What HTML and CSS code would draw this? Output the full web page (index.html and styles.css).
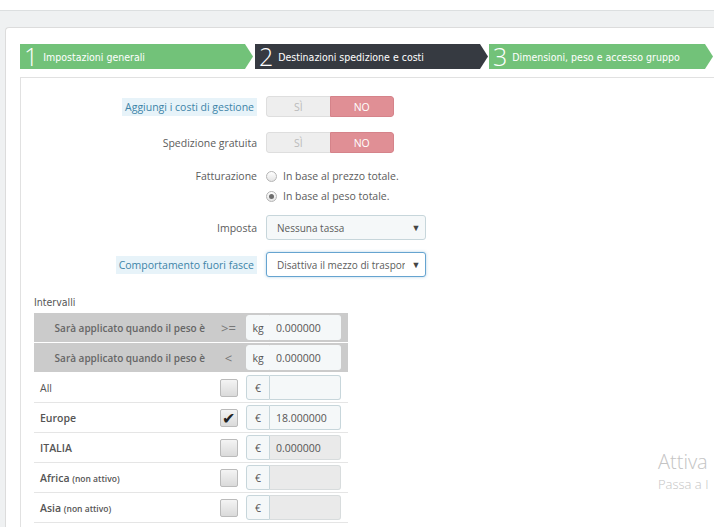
FILE: index.html
```html
<!DOCTYPE html>
<html lang="it">
<head>
    <meta charset="UTF-8">
    <title>Corriere - Destinazioni spedizione e costi</title>
    <link rel="stylesheet" href="styles.css">
</head>
<body>

    <div class="topbar"></div>

    <div class="page">
        <div class="panel">

            <div class="steps">
                <div class="step step-done"><span class="step-num">1</span>Impostazioni generali</div>
                <div class="step step-current"><span class="step-num">2</span>Destinazioni spedizione e costi</div>
                <div class="step step-done step-last"><span class="step-num">3</span>Dimensioni, peso e accesso gruppo</div>
            </div>

            <div class="step-content">

                <div class="form-row">
                    <div class="label-col"><span class="hint">Aggiungi i costi di gestione</span></div>
                    <div class="switch">
                        <span class="switch-yes">SÌ</span>
                        <span class="switch-no">NO</span>
                    </div>
                </div>

                <div class="form-row">
                    <div class="label-col">Spedizione gratuita</div>
                    <div class="switch">
                        <span class="switch-yes">SÌ</span>
                        <span class="switch-no">NO</span>
                    </div>
                </div>

                <div class="form-row row-radio">
                    <div class="label-col">Fatturazione</div>
                    <div class="radios">
                        <label class="radio"><span class="radio-dot"></span>In base al prezzo totale.</label>
                        <label class="radio"><span class="radio-dot checked"></span>In base al peso totale.</label>
                    </div>
                </div>

                <div class="form-row row-select">
                    <div class="label-col">Imposta</div>
                    <div class="select"><span class="select-text">Nessuna tassa</span><span class="caret">▼</span></div>
                </div>

                <div class="form-row row-select2">
                    <div class="label-col"><span class="hint">Comportamento fuori fasce</span></div>
                    <div class="select select-focus"><span class="select-text">Disattiva il mezzo di traspor</span><span class="caret">▼</span></div>
                </div>

                <div class="ranges-title">Intervalli</div>

                <table class="ranges">
                    <tr class="range-head">
                        <td class="zone-name">Sarà applicato quando il peso è</td>
                        <td class="op">&gt;=</td>
                        <td class="cell-input">
                            <div class="input-group"><span class="addon">kg</span><span class="field">0.000000</span></div>
                        </td>
                    </tr>
                    <tr class="range-head">
                        <td class="zone-name">Sarà applicato quando il peso è</td>
                        <td class="op">&lt;</td>
                        <td class="cell-input">
                            <div class="input-group"><span class="addon">kg</span><span class="field">0.000000</span></div>
                        </td>
                    </tr>
                    <tr class="zone">
                        <td class="zone-label normal">All</td>
                        <td class="op"><span class="check"></span></td>
                        <td class="cell-input">
                            <div class="input-group"><span class="addon">€</span><span class="field"></span></div>
                        </td>
                    </tr>
                    <tr class="zone">
                        <td class="zone-label">Europe</td>
                        <td class="op"><span class="check checked">✔</span></td>
                        <td class="cell-input">
                            <div class="input-group"><span class="addon">€</span><span class="field">18.000000</span></div>
                        </td>
                    </tr>
                    <tr class="zone">
                        <td class="zone-label">ITALIA</td>
                        <td class="op"><span class="check"></span></td>
                        <td class="cell-input">
                            <div class="input-group"><span class="addon">€</span><span class="field disabled">0.000000</span></div>
                        </td>
                    </tr>
                    <tr class="zone">
                        <td class="zone-label">Africa <small>(non attivo)</small></td>
                        <td class="op"><span class="check"></span></td>
                        <td class="cell-input">
                            <div class="input-group"><span class="addon">€</span><span class="field disabled"></span></div>
                        </td>
                    </tr>
                    <tr class="zone">
                        <td class="zone-label">Asia <small>(non attivo)</small></td>
                        <td class="op"><span class="check"></span></td>
                        <td class="cell-input">
                            <div class="input-group"><span class="addon">€</span><span class="field disabled"></span></div>
                        </td>
                    </tr>
                </table>

            </div>
        </div>
    </div>

    <div class="watermark">
        <div class="wm-big">Attiva</div>
        <div class="wm-small">Passa a I</div>
    </div>

</body>
</html>
```

FILE: styles.css
```css
body {
    margin: 0;
    font-family: 'Open Sans', sans-serif;
    font-size: 10.5px;
    color: #5c5c5c;
    background: #eff1f2;
    overflow: hidden;
    height: 527px;
}

.topbar {
    height: 10px;
    background: #fff;
    border-bottom: 1px solid #dcdfe0;
}

.page {
    padding: 16px 0 0 5px;
}

.panel {
    background: #fff;
    border: 1px solid #dcdcdc;
    border-right: none;
    border-radius: 4px 0 0 0;
    padding: 16px 0 0 14px;
    height: 600px;
}

/* Wizard steps */
.steps {
    display: flex;
    height: 25px;
}

.step {
    display: flex;
    align-items: center;
    color: #fff;
    font-family: 'DejaVu Sans Condensed', 'DejaVu Sans', sans-serif;
    font-size: 10.5px;
    white-space: nowrap;
    clip-path: polygon(0 0, calc(100% - 8px) 0, 100% 50%, calc(100% - 8px) 100%, 0 100%);
}

.step-done { background: #72c279; }
.step-current { background: #363a41; }

.step:nth-child(1) { width: 233px; margin-right: 2px; }
.step:nth-child(2) { width: 233px; margin-right: 1px; }
.step:nth-child(3) { width: 224px; }

.step-num {
    font-family: 'Open Sans', sans-serif;
    font-weight: 300;
    font-size: 25px;
    line-height: 25px;
    padding: 0 5px 0 4px;
}

/* Step content box */
.step-content {
    margin-top: 8px;
    border: 1px solid #e1e1e1;
    border-right: none;
    padding: 18px 0 0 13px;
    height: 600px;
}

.form-row {
    display: flex;
    align-items: center;
    margin-bottom: 15px;
}

.row-radio { align-items: flex-start; margin-bottom: 9px; margin-top: -2px; }
.row-select { margin-bottom: 12px; }
.row-select2 { margin-bottom: 19px; }

.label-col {
    width: 223px;
    padding-right: 9px;
    text-align: right;
}

.row-radio .label-col { padding-top: 3px; }

.hint {
    background: #e7f3f9;
    color: #3d84a8;
    padding: 2px 3px;
}

.switch {
    display: flex;
    width: 128px;
    height: 21px;
    border-radius: 3px;
    overflow: hidden;
}

.switch span {
    flex: 1;
    display: flex;
    align-items: center;
    justify-content: center;
}

.switch-yes {
    background: #eeeeee;
    color: #bbb;
    border: 1px solid #dedede;
    border-right: none;
    border-radius: 3px 0 0 3px;
}

.switch-no {
    background: #e08f95;
    color: #fff;
    border: 1px solid #d5838a;
    border-radius: 0 3px 3px 0;
}

.radios {
    display: flex;
    flex-direction: column;
}

.radio {
    display: flex;
    align-items: center;
    height: 20px;
    color: #5c5c5c;
}

.radio-dot {
    width: 9px;
    height: 9px;
    border: 1px solid #b5b5b5;
    border-radius: 50%;
    background: linear-gradient(#fff, #e4e4e4);
    margin: 0 6px 0 0;
    position: relative;
}

.radio-dot.checked::after {
    content: "";
    position: absolute;
    left: 2px;
    top: 2px;
    width: 5px;
    height: 5px;
    border-radius: 50%;
    background: #6d6d6d;
}

.select {
    width: 148px;
    height: 23px;
    border: 1px solid #c7d6db;
    border-radius: 3px;
    background: #f5f8f9;
    display: flex;
    align-items: center;
    padding-left: 10px;
    white-space: nowrap;
}

.select-text {
    flex: 1;
    overflow: hidden;
    margin-right: 2px;
    font-size: 10px;
}

.select-focus {
    border-color: #66a4d0;
    box-shadow: 0 0 3px rgba(102, 164, 208, 0.5);
    background: #fff;
}

.caret {
    width: 18px;
    flex: none;
    text-align: center;
    font-size: 9px;
    color: #444;
}

.ranges-title {
    font-family: 'DejaVu Sans Condensed', 'DejaVu Sans', sans-serif;
    font-size: 10.5px;
    color: #555;
    margin-bottom: 5px;
}

/* Ranges table */
.ranges {
    border-collapse: collapse;
    width: 314px;
}

.ranges td {
    padding: 0;
}

.range-head td {
    background: #cbcbcb;
    height: 29px;
    border-bottom: 1px solid #fff;
}

.range-head .zone-name {
    font-weight: 600;
    font-size: 10px;
    color: #666;
    text-align: right;
    padding-right: 6px;
}

.op {
    width: 35px;
    text-align: center;
    color: #777;
    font-size: 13px;
}

.cell-input {
    width: 102px;
}

.zone td {
    height: 29px;
    border-bottom: 1px solid #e5e5e5;
}

.zone-label {
    padding-left: 6px !important;
    font-weight: 600;
    color: #555;
}

.zone-label.normal {
    font-weight: normal;
}

.zone-label small {
    font-size: 8.5px;
}

.check {
    display: inline-flex;
    align-items: center;
    justify-content: center;
    width: 16px;
    height: 16px;
    border: 1px solid #bbb;
    border-radius: 2px;
    background: linear-gradient(#f4f4f4, #dadada);
    vertical-align: middle;
    color: #222;
    font-size: 16px;
    line-height: 16px;
}

.input-group {
    display: flex;
    width: 95px;
    height: 25px;
}

.addon {
    width: 22px;
    border: 1px solid #c7d6db;
    border-radius: 3px 0 0 3px;
    background: #f5f8f9;
    display: flex;
    align-items: center;
    justify-content: center;
    color: #555;
}

.field {
    flex: 1;
    border: 1px solid #c7d6db;
    border-left: none;
    border-radius: 0 3px 3px 0;
    background: #f5f8f9;
    display: flex;
    align-items: center;
    padding-left: 6px;
    color: #555;
}

.range-head .addon,
.range-head .field {
    background: #f5f8f9;
    border-color: #f5f8f9;
}

.field.disabled {
    background: #eaeaea;
    border-color: #d8dcdd;
}

/* Windows activation watermark */
.watermark {
    position: absolute;
    left: 658px;
    top: 449px;
    color: #c4c4c4;
    font-family: 'Open Sans', sans-serif;
    font-weight: 300;
    white-space: nowrap;
}

.wm-big {
    font-size: 20px;
    line-height: 26px;
}

.wm-small {
    font-size: 13px;
    line-height: 18px;
}
```
